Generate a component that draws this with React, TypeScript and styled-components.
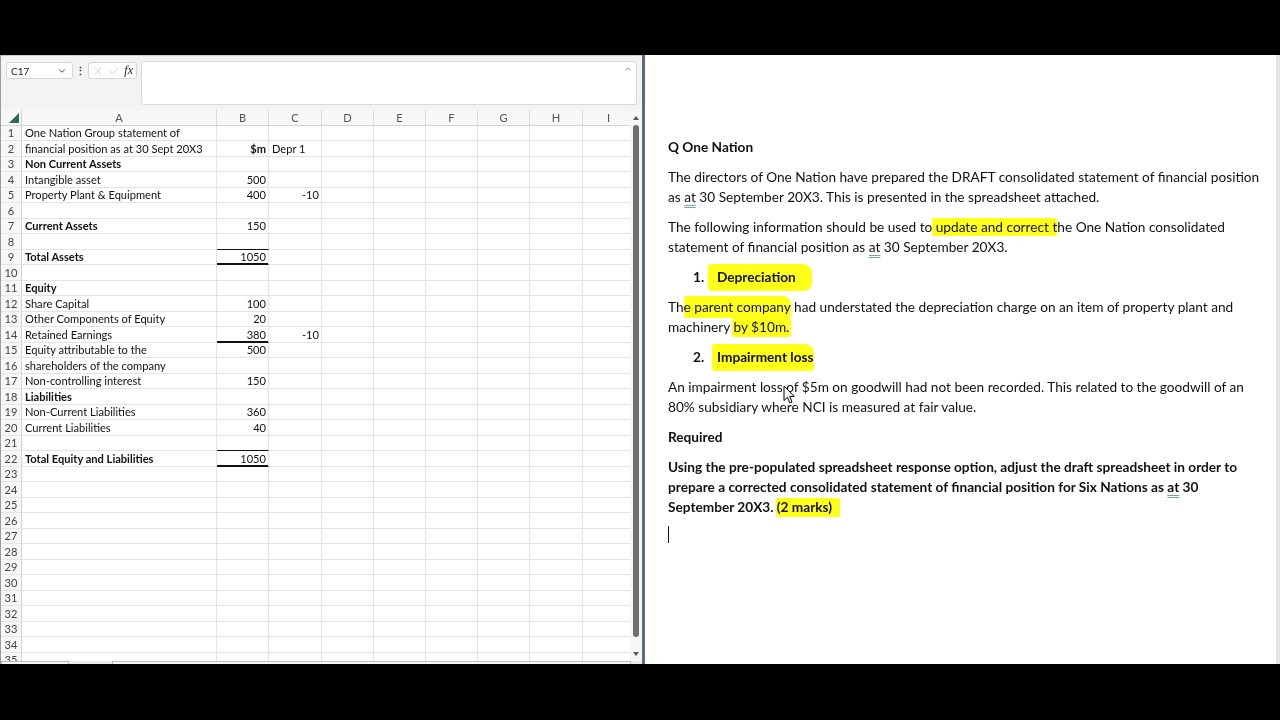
import React from 'react';
import styled, { createGlobalStyle } from 'styled-components';
import { ChevronDown, ChevronUp, X, Check } from 'lucide-react';

const Global = createGlobalStyle`
  html, body { margin: 0; padding: 0; background: #000; }
  body { width: 1280px; height: 720px; overflow: hidden; }
  * { box-sizing: border-box; }
`;

const Screen = styled.div`
  width: 1280px;
  height: 720px;
  display: flex;
  flex-direction: column;
  background: #000;
`;

const Letterbox = styled.div<{ $h: number }>`
  flex: none;
  height: ${(p) => p.$h}px;
  background: #000;
`;

const Stage = styled.div`
  flex: none;
  height: 609px;
  display: flex;
  overflow: hidden;
  background: #fff;
`;

/* ---------- workbook ---------- */

const Workbook = styled.div`
  flex: none;
  width: 642px;
  display: flex;
  flex-direction: column;
  background: #f3f3f3;
  border-left: 1px solid #9c9c9c;
  font-family: Lato, 'Open Sans', sans-serif;
`;

const FormulaBar = styled.div`
  flex: none;
  height: 55px;
  display: flex;
  align-items: flex-start;
  padding: 5px 5px 0 5px;
  border-top: 1px solid #c9c9c9;
`;

const NameBox = styled.div`
  flex: none;
  width: 67px;
  height: 17px;
  margin-top: 1px;
  display: flex;
  align-items: center;
  justify-content: space-between;
  padding: 0 5px 0 4px;
  background: #fff;
  border: 1px solid #d6d6d6;
  border-radius: 3px;
  font-size: 10px;
  color: #222;
`;

const Kebab = styled.div`
  flex: none;
  width: 15px;
  height: 17px;
  margin-top: 1px;
  display: flex;
  align-items: center;
  justify-content: center;
  font-size: 11px;
  font-weight: 700;
  color: #444;
`;

const FnBox = styled.div`
  flex: none;
  width: 49px;
  height: 17px;
  margin-top: 1px;
  display: flex;
  align-items: center;
  justify-content: space-between;
  padding: 0 3px 0 3px;
  background: #fff;
  border: 1px solid #d6d6d6;
  border-radius: 3px;
`;

const Fx = styled.span`
  font-family: 'Liberation Serif', serif;
  font-style: italic;
  font-size: 12px;
  color: #222;
`;

const FormulaInput = styled.div`
  flex: 1;
  height: 44px;
  margin-left: 4px;
  display: flex;
  justify-content: flex-end;
  padding: 2px 3px 0 0;
  background: #fff;
  border: 1px solid #d8d8d8;
  border-radius: 3px;
  color: #666;
`;

const SheetArea = styled.div`
  flex: none;
  height: 551px;
  display: flex;
  background: #fff;
`;

const Viewport = styled.div`
  flex: none;
  width: 629px;
  overflow: hidden;
`;

const Grid = styled.div`
  display: grid;
  grid-template-columns: 21px 195px 52px 53px 52px 52px 52px 52px 53px 52px;
  grid-auto-rows: 15.5px;
  width: 634px;
  font-size: 11.1px;
  color: #111;
`;

const Corner = styled.div`
  position: relative;
  background: #f7f7f7;
  border-right: 1px solid #d4d4d4;
  border-bottom: 1px solid #d4d4d4;
  &::after {
    content: '';
    position: absolute;
    right: 2px;
    bottom: 2px;
    width: 0;
    height: 0;
    border-left: 10px solid transparent;
    border-bottom: 10px solid #2f6b47;
  }
`;

const ColHead = styled.div`
  display: flex;
  align-items: center;
  justify-content: center;
  background: #f7f7f7;
  border-right: 1px solid #dadada;
  border-bottom: 1px solid #d4d4d4;
  color: #555;
  line-height: 1;
`;

const RowHead = styled.div`
  display: flex;
  align-items: center;
  justify-content: center;
  background: #f7f7f7;
  border-right: 1px solid #d4d4d4;
  border-bottom: 1px solid #e6e6e6;
  color: #444;
  line-height: 1;
`;

type Rule = 'thin' | 'thick' | undefined;

const Cell = styled.div<{ $align?: 'left' | 'right'; $bold?: boolean; $rule?: Rule }>`
  display: flex;
  align-items: center;
  justify-content: ${(p) => (p.$align === 'right' ? 'flex-end' : 'flex-start')};
  padding: 0 2px 0 3px;
  white-space: nowrap;
  overflow: visible;
  font-weight: ${(p) => (p.$bold ? 700 : 400)};
  border-right: 1px solid #e3e3e3;
  border-bottom: 1px solid ${(p) => (p.$rule ? '#111' : '#e3e3e3')};
  box-shadow: ${(p) => (p.$rule === 'thick' ? 'inset 0 -1px 0 #111' : 'none')};
  line-height: 1;
`;

const VScroll = styled.div`
  flex: none;
  width: 12px;
  display: flex;
  flex-direction: column;
  align-items: center;
  padding: 3px 0 2px;
  background: #f6f6f6;
`;

const Arrow = styled.div<{ $down?: boolean }>`
  flex: none;
  width: 0;
  height: 0;
  margin: 3px 0;
  border-left: 3.5px solid transparent;
  border-right: 3.5px solid transparent;
  ${(p) => (p.$down ? 'border-top: 4px solid #555;' : 'border-bottom: 4px solid #555;')}
`;

const Thumb = styled.div`
  flex: 1;
  width: 6px;
  margin: 2px 0 12px;
  border-radius: 3px;
  background: #6f6f6f;
`;

const TabStrip = styled.div`
  flex: none;
  height: 3px;
  display: flex;
  gap: 43px;
  background: #ececec;
`;

const TabStub = styled.div<{ $w: number }>`
  flex: none;
  width: ${(p) => p.$w}px;
  border: 1px solid #bdbdbd;
  border-bottom: none;
  background: #f7f7f7;
`;

const Divider = styled.div`
  flex: none;
  width: 3px;
  background: #5f6b76;
`;

/* ---------- document ---------- */

const DocPane = styled.div`
  position: relative;
  flex: 1;
  display: flex;
  background: #fff;
`;

const DocBody = styled.div`
  flex: 1;
  padding: 82px 0 0 23px;
  font-family: Lato, 'Open Sans', sans-serif;
  font-size: 13.66px;
  line-height: 20px;
  color: #111;
  white-space: pre;
`;

const DocRail = styled.div`
  flex: none;
  width: 4px;
  background: #e6e6e6;
`;

const Para = styled.div<{ $bold?: boolean }>`
  margin: 0 0 10px;
  font-weight: ${(p) => (p.$bold ? 700 : 400)};
`;

const Item = styled.div`
  margin: 0 0 10px;
  padding-left: 25px;
  font-weight: 700;
`;

const ItemNo = styled.span`
  display: inline-block;
  width: 24px;
`;

const Mark = styled.span<{ $pad?: string; $radius?: string; $shift?: number }>`
  background: #ffff1a;
  padding: ${(p) => p.$pad ?? '1px 0'};
  margin-left: ${(p) => p.$shift ?? 0}px;
  border-radius: ${(p) => p.$radius ?? '2px'};
  mix-blend-mode: multiply;
`;

const Flag = styled.span`
  text-decoration: underline double #7f9cc9;
  text-underline-offset: 3px;
`;

const Caret = styled.div`
  width: 1px;
  height: 17px;
  margin-top: -1px;
  background: #111;
`;

const Pointer = styled.svg`
  position: absolute;
  left: 138px;
  top: 330px;
`;

type Row = {
  a?: string;
  aBold?: boolean;
  b?: string;
  bBold?: boolean;
  c?: string;
  cLeft?: boolean;
  rule?: Rule;
};

const rows: Row[] = [
  { a: 'One Nation Group statement of' },
  { a: 'financial position as at 30 Sept 20X3', b: '$m', bBold: true, c: 'Depr 1', cLeft: true },
  { a: 'Non Current Assets', aBold: true },
  { a: 'Intangible asset', b: '500' },
  { a: 'Property Plant & Equipment', b: '400', c: '-10' },
  {},
  { a: 'Current Assets', aBold: true, b: '150' },
  { rule: 'thin' },
  { a: 'Total Assets', aBold: true, b: '1050', rule: 'thick' },
  {},
  { a: 'Equity', aBold: true },
  { a: 'Share Capital', b: '100' },
  { a: 'Other Components of Equity', b: '20' },
  { a: 'Retained Earnings', b: '380', c: '-10', rule: 'thick' },
  { a: 'Equity attributable to the', b: '500' },
  { a: 'shareholders of the company' },
  { a: 'Non-controlling interest', b: '150' },
  { a: 'Liabilities', aBold: true },
  { a: 'Non-Current Liabilities', b: '360' },
  { a: 'Current Liabilities', b: '40' },
  { rule: 'thin' },
  { a: 'Total Equity and Liabilities', aBold: true, b: '1050', rule: 'thick' },
];

const columns = ['A', 'B', 'C', 'D', 'E', 'F', 'G', 'H', 'I'];
const TOTAL_ROWS = 35;

function Sheet() {
  const cells: React.ReactNode[] = [<Corner key="corner" />];
  columns.forEach((c) => cells.push(<ColHead key={`h${c}`}>{c}</ColHead>));
  for (let i = 0; i < TOTAL_ROWS; i++) {
    const r: Row = rows[i] ?? {};
    cells.push(<RowHead key={`r${i}`}>{i + 1}</RowHead>);
    cells.push(
      <Cell key={`a${i}`} $bold={r.aBold}>
        {r.a}
      </Cell>
    );
    cells.push(
      <Cell key={`b${i}`} $align="right" $bold={r.bBold} $rule={r.rule}>
        {r.b}
      </Cell>
    );
    cells.push(
      <Cell key={`c${i}`} $align={r.cLeft ? 'left' : 'right'}>
        {r.c}
      </Cell>
    );
    for (let k = 3; k < columns.length; k++) cells.push(<Cell key={`x${i}-${k}`} />);
  }
  return <Grid>{cells}</Grid>;
}

export default function App() {
  return (
    <Screen>
      <Global />
      <Letterbox $h={55} />
      <Stage>
        <Workbook>
          <FormulaBar>
            <NameBox>
              <span>C17</span>
              <ChevronDown size={10} strokeWidth={2.2} color="#333" />
            </NameBox>
            <Kebab>⋮</Kebab>
            <FnBox>
              <X size={12} strokeWidth={1.1} color="#b5b5b5" />
              <Check size={12} strokeWidth={1.1} color="#b5b5b5" />
              <Fx>fx</Fx>
            </FnBox>
            <FormulaInput>
              <ChevronUp size={10} strokeWidth={1.8} />
            </FormulaInput>
          </FormulaBar>
          <SheetArea>
            <Viewport>
              <Sheet />
            </Viewport>
            <VScroll>
              <Arrow />
              <Thumb />
              <Arrow $down />
            </VScroll>
          </SheetArea>
          <TabStrip>
            <TabStub $w={68} />
            <TabStub $w={519} />
          </TabStrip>
        </Workbook>
        <Divider />
        <DocPane>
          <DocBody>
            <Para $bold>Q One Nation</Para>
            <Para>
              {'The directors of One Nation have prepared the DRAFT consolidated statement of financial position'}
              <br />
              {'as '}
              <Flag>at</Flag>
              {' 30 September 20X3. This is presented in the spreadsheet attached.'}
            </Para>
            <Para>
              {'The following information should be used to'}
              <Mark>{' update and correct t'}</Mark>
              {'he One Nation consolidated'}
              <br />
              {'statement of financial position as '}
              <Flag>at</Flag>
              {' 30 September 20X3.'}
            </Para>
            <Item>
              <ItemNo>1.</ItemNo>
              <Mark $pad="5px 16px 6px 9px" $shift={-9} $radius="4px 9px 8px 3px">
                Depreciation
              </Mark>
            </Item>
            <Para>
              {'Th'}
              <Mark $pad="3px 0 3px 0" $radius="3px 8px 2px 2px">e parent company</Mark>
              {' had understated the depreciation charge on an item of property plant and'}
              <br />
              {'machinery '}
              <Mark $pad="1px 2px 2px 1px" $shift={-1}>by $10m.</Mark>
            </Para>
            <Item>
              <ItemNo>2.</ItemNo>
              <Mark $pad="5px 0 6px 5px" $shift={-5} $radius="3px 9px 3px 3px">
                Impairment loss
              </Mark>
            </Item>
            <Para>
              {'An impairment loss of $5m on goodwill had not been recorded. This related to the goodwill of an'}
              <br />
              {'80% subsidiary where NCI is measured at fair value.'}
            </Para>
            <Para $bold>Required</Para>
            <Para $bold>
              {'Using the pre-populated spreadsheet response option, adjust the draft spreadsheet in order to'}
              <br />
              {'prepare a corrected consolidated statement of financial position for Six Nations as '}
              <Flag>at</Flag>
              {' 30'}
              <br />
              {'September 20X3. '}
              <Mark $pad="1px 8px 2px 1px" $shift={-1}>(2 marks)</Mark>
            </Para>
            <Caret />
          </DocBody>
          <DocRail />
          <Pointer width="13" height="20" viewBox="0 0 13 20">
            <path
              d="M1 1 L1 15.5 L4.4 12.3 L6.8 18 L9 17 L6.7 11.4 L11.2 11.4 Z"
              fill="#fff"
              stroke="#000"
              strokeWidth="1"
              strokeLinejoin="round"
            />
          </Pointer>
        </DocPane>
      </Stage>
      <Letterbox $h={56} />
    </Screen>
  );
}
